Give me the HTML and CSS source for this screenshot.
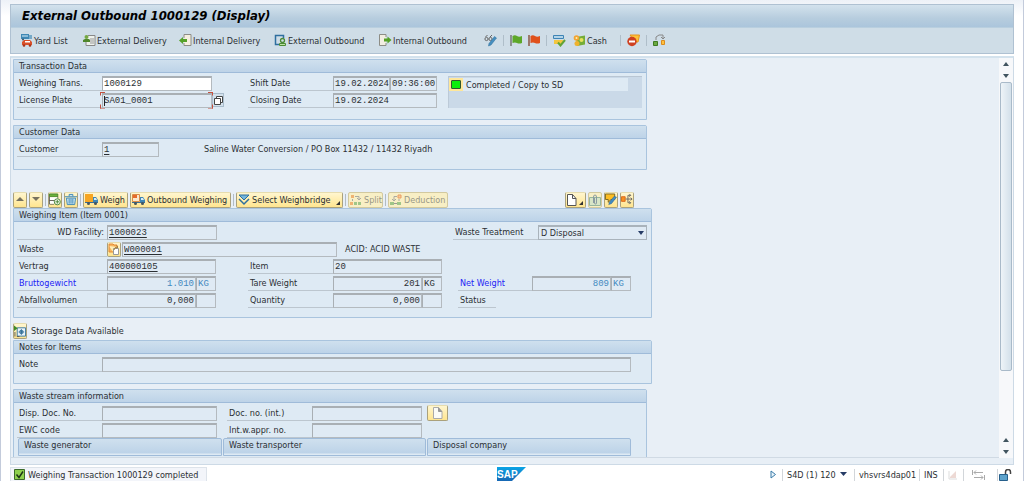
FILE: index.html
```
<!DOCTYPE html>
<html lang="en">
<head>
<meta charset="utf-8">
<title>External Outbound 1000129 (Display)</title>
<link rel="stylesheet" href="styles.css">
</head>
<body>
<div class="window">
  <header class="head">
    <h1 class="title">External Outbound 1000129 (Display)</h1>
    <div class="toolbar">
      <button class="tool w-yard"><svg width="13" height="13" viewBox="0 0 13 13"><path d="M1 0h8v5H1z" fill="#3f88b5"/><path d="M9 1h3v4H9z" fill="#75a9c8"/><path d="M2 2h6" stroke="#d9edf7"/><circle cx="3" cy="5.500" r="1" fill="#3b566b"/><path d="M2 8l2-2h6l2 2v3H2z" fill="#d9502b"/><path d="M5 7h5v1.500H5z" fill="#fff"/><circle cx="4" cy="11.500" r="1.300" fill="#a93419"/><circle cx="10" cy="11.500" r="1.300" fill="#a93419"/></svg>Yard List</button>
      <button class="tool w-extdel"><svg width="13" height="13" viewBox="0 0 13 13"><path d="M5 1.500h7v10H3V8" fill="#eef1ec" stroke="#888"/><path d="M7 5h4M7 7h4M7 9h4" stroke="#999"/><circle cx="3.500" cy="3" r="2" fill="#75a843"/><path d="M0 8V6l2-1h4l1 1v2z" fill="#4f872b"/></svg>External Delivery</button>
      <button class="tool w-intdel"><svg width="13" height="13" viewBox="0 0 13 13"><path d="M5 4V.500h7v11H5V9" fill="#f6efdf" stroke="#8d8d86"/><path d="M0 6.500L4 3v2h4v3H4v2z" fill="#55a128"/></svg>Internal Delivery</button>
      <button class="tool w-extout"><svg width="13" height="13" viewBox="0 0 13 13"><path d="M5 10.500H1.500v-9h8V4" fill="none" stroke="#2f6f9f" stroke-width="1.500"/><circle cx="8.500" cy="6.500" r="2" fill="none" stroke="#4b8b35" stroke-width="1.300"/><path d="M5.500 11.500V9.500h6v2z" fill="#bde0a4" stroke="#4b8b35"/></svg>External Outbound</button>
      <button class="tool w-intout"><svg width="13" height="13" viewBox="0 0 13 13"><path d="M7 3V.500H.500v11H7V9" fill="#f2eee2" stroke="#8d8d86"/><path d="M12.500 6L8.500 2.500v2H5v3h3.500v2z" fill="#55a128"/></svg>Internal Outbound</button>
      <button class="tool w-icon" aria-label="Display or change"><svg width="13" height="13" viewBox="0 0 13 13"><g fill="none" stroke="#666"><circle cx="2.500" cy="5" r="1.600"/><circle cx="6.500" cy="5" r="1.600"/><path d="M1.500 3l2-2M6 3l2-2"/></g><path d="M12.500 4L7 11l-2.500 1 .500-2.500L10.500 2.500z" fill="#468fc0" stroke="#2d6c99" stroke-width=".5"/></svg></button>
      <span class="sep"></span>
      <button class="tool w-flag" aria-label="Green flag"><svg width="13" height="13" viewBox="0 0 13 13"><path d="M1 1v11" stroke="#777" stroke-width="1.500"/><path d="M2.500 2Q5 .500 7 2t5 0v7q-3 1-5 0t-4.500 0z" fill="#5da829"/></svg></button>
      <button class="tool w-flag" aria-label="Red flag"><svg width="13" height="13" viewBox="0 0 13 13"><path d="M1 1v11" stroke="#8b5645" stroke-width="1.500"/><path d="M2.500 2Q5 .500 7 2t5 0v7q-3 1-5 0t-4.500 0z" fill="#e0511c"/></svg></button>
      <span class="sep"></span>
      <button class="tool w-check" aria-label="Check document"><svg width="13" height="13" viewBox="0 0 13 13"><path d="M.500 1.500h10v3H.500z" fill="#b3d4e8" stroke="#3d84b5"/><path d="M1 6h9v2l-2 2H1z" fill="#f3c63f"/><path d="M5 8.500l2.500 3L12 6" fill="none" stroke="#62a336" stroke-width="2"/></svg></button>
      <button class="tool w-cash"><svg width="13" height="13" viewBox="0 0 13 13"><path d="M3 3l9-1.500v9L4 12z" fill="#75ad38"/><circle cx="3.500" cy="4" r="2.800" fill="#f2a534"/><circle cx="8.500" cy="6" r="2" fill="#e7e15c"/><circle cx="4" cy="9.500" r="2.500" fill="#efb22d"/><circle cx="3.500" cy="4" r="1" fill="#fff1b0"/></svg>Cash</button>
      <span class="sep"></span>
      <button class="tool w-stop" aria-label="Stop"><svg width="13" height="13" viewBox="0 0 13 13"><path d="M3 1h9.500L11 8H8z" fill="#ffc338" stroke="#e8941e"/><circle cx="5" cy="7.500" r="4.700" fill="#cf4121"/><path d="M2 7.500h6" stroke="#fff" stroke-width="2"/></svg></button>
      <span class="sep"></span>
      <button class="tool" aria-label="Relations"><svg width="13" height="13" viewBox="0 0 13 13"><path d="M3 6V3l3-2h4v4M8 3l2 2 2-2" fill="none" stroke="#888"/><path d="M.500 7.500h4v4h-4z" fill="#69a941" stroke="#3f7a21"/><path d="M8.500 6.500h3v4h-3z" fill="#ffc13e" stroke="#db8c1e"/></svg></button>
    </div>
  </header>

  <main class="body">
    <div class="content">
      <section class="panel narrow trans">
        <h2>Transaction Data</h2>
        <div class="split">
          <div class="rows">
            <div class="row g-trans"><label for="wt">Weighing Trans.</label><input id="wt" class="edit" value="1000129"><i></i><label for="sd">Shift Date</label><input id="sd" value="19.02.2024" readonly><input aria-label="Shift time" value="09:36:00" readonly></div>
            <div class="row g-trans2"><label for="lp">License Plate</label><span class="focus"><input id="lp" value="SA01_0001" readonly><b class="caret"></b></span><button class="match" aria-label="Search help"><svg width="11" height="11" viewBox="0 0 11 11"><path d="M3.500 1.500h6v6h-6z" fill="#fff" stroke="#444"/><path d="M1.500 3.500h6v6h-6z" fill="#fff" stroke="#444"/></svg></button><i></i><label for="cd">Closing Date</label><input id="cd" value="19.02.2024" readonly></div>
          </div>
          <div class="state"><div class="state-line"><span class="lamp"><b></b></span>Completed / Copy to SD</div></div>
        </div>
      </section>

      <section class="panel narrow cust">
        <h2>Customer Data</h2>
        <div class="rows">
          <div class="row g-cust"><label for="cu">Customer</label><input id="cu" class="u" value="1" readonly><i></i><span>Saline Water Conversion / PO Box 11432 / 11432 Riyadh</span></div>
        </div>
      </section>

      <div class="actions">
        <button class="btn sq" aria-label="Previous"><svg width="9" height="9" viewBox="0 0 9 9"><path d="M0 6h8L4 2z" fill="#777260"/></svg></button>
        <button class="btn sq" aria-label="Next"><svg width="9" height="9" viewBox="0 0 9 9"><path d="M0 2h8L4 6z" fill="#777260"/></svg></button>
        <span class="bar"></span>
        <button class="btn sq" aria-label="Insert row"><svg width="12" height="13" viewBox="0 0 13 13"><path d="M.500.500h9v3h-9z" fill="#6bb13b" stroke="#46842a"/><path d="M9.500 3.500v2M.500 3.500v8h5M.500 7.500h6" fill="none" stroke="#555"/><path d="M1 4h8v3H1zM1 8h5v3H1z" fill="#fff"/><circle cx="9" cy="9" r="3.300" fill="#eef6e4" stroke="#46843a"/><path d="M7 9h4M9 7v4" stroke="#46843a"/></svg></button>
        <button class="btn sq" aria-label="Delete"><svg width="12" height="13" viewBox="0 0 13 13"><path d="M0 3.500h13M4.500 3V1h4v2M1.500 5l1 7h8l1-7zM4.500 6v5M6.500 6v5M8.500 6v5" fill="#c9e3ef" stroke="#3b86b5"/></svg></button>
        <span class="bar"></span>
        <button class="btn w-weigh"><svg width="13" height="13" viewBox="0 0 13 13"><path d="M0 1h8v8H0z" fill="#f6a623"/><path d="M8 4h3l2 3v3H8z" fill="#3f86b5"/><path d="M9 5h2l1 2H9z" fill="#d6ecf8"/><path d="M0 9h13v1H0z" fill="#396e96"/><circle cx="3.500" cy="10.500" r="1.500" fill="#44545e"/><circle cx="10.500" cy="10.500" r="1.500" fill="#44545e"/></svg>Weigh</button>
        <button class="btn w-out"><svg width="13" height="13" viewBox="0 0 13 13"><path d="M.500 1.500h7v7h-7z" fill="#fbe8cc" stroke="#db8c45"/><path d="M1 2h4v3H1z" fill="#e56b2b"/><path d="M8 4h3l2 3v3H8z" fill="#3f86b5"/><path d="M9 5h2l1 2H9z" fill="#d6ecf8"/><path d="M0 9h13v1H0z" fill="#396e96"/><circle cx="3.500" cy="10.500" r="1.500" fill="#44545e"/><circle cx="10.500" cy="10.500" r="1.500" fill="#44545e"/></svg>Outbound Weighing</button>
        <span class="bar"></span>
        <button class="btn w-select menu"><svg width="12" height="12" viewBox="0 0 12 12"><path d="M1 1h10L6 6z" fill="#75b6dc" stroke="#2d6f9e"/><path d="M1 5l5 5 5-5" fill="none" stroke="#2d6f9e" stroke-width="1.500"/></svg>Select Weighbridge</button>
        <span class="bar"></span>
        <button class="btn w-split" disabled><svg width="12" height="12" viewBox="0 0 12 12"><path d="M1 1h3v3H1z" fill="#eda55f"/><path d="M5 2.500h4V6M7 4l2 2 2-2M2.500 5v2" fill="none" stroke="#999"/><path d="M0 8h3v3H0z" fill="#eda55f"/><path d="M4 8h3v3H4zM8 8h3v3H8z" fill="#8bbd79"/></svg>Split</button>
        <span class="bar"></span>
        <button class="btn w-ded" disabled><svg width="12" height="12" viewBox="0 0 12 12"><path d="M8 1h3v3H8z" fill="#f7c295" stroke="#e88a4b"/><path d="M7 2.500H4V7M2 5l2 2 2-2M9 5v2" fill="none" stroke="#999"/><path d="M0 8h4v3H0zM7 8h4v3H7z" fill="#8bbd79"/><path d="M4 9.500h3" stroke="#888"/></svg>Deduction</button>
        <span class="grow"></span>
        <button class="btn w-new menu" aria-label="Create"><svg width="10" height="12" viewBox="0 0 10 12"><path d="M.500.500h5l3.500 4v7H.500z" fill="#fff" stroke="#555"/><path d="M5.500.500v4H9" fill="none" stroke="#555"/></svg></button>
        <button class="btn sq" disabled aria-label="Attachments"><svg width="12" height="12" viewBox="0 0 12 12"><path d="M.500 3.500h11v8H.500z" fill="#cfe3c8" stroke="#80a894"/><path d="M4.500 9V3q0-2 1.500-2t1.500 2v6q0 1-1 1t-1-1V4" fill="none" stroke="#70879a"/></svg></button>
        <button class="btn sq" aria-label="Edit text"><svg width="12" height="13" viewBox="0 0 13 13"><path d="M.500.500h10v6h-4l-3 3v-3h-3z" fill="#fcbd24" stroke="#77631c"/><path d="M12.500 4L7 11l-3 1 1-3 5-6z" fill="#438bc0" stroke="#285f8a" stroke-width=".5"/></svg></button>
        <button class="btn sq" aria-label="Distribute"><svg width="12" height="13" viewBox="0 0 13 13"><path d="M.500 3.500h4v5h-4z" fill="#f5921f" stroke="#d8651c"/><path d="M5 6h7M7.500 6V2h3M7.500 6v4h3M9 .500L10.500 2 9 3.500M10.500 4.500L12 6l-1.500 1.500M9 8.500l1.500 1.500L9 11.500" fill="none" stroke="#666"/></svg></button>
      </div>

      <section class="panel wide item">
        <h2>Weighing Item (Item 0001)</h2>
        <div class="rows">
          <div class="row g-fac"><label class="right" for="wf">WD Facility:</label><input id="wf" class="u" value="1000023" readonly><i></i><label for="tr">Waste Treatment</label><span class="drop"><select id="tr"><option>D Disposal</option></select></span></div>
          <div class="row g-waste"><label for="wa">Waste</label><button class="btn small" aria-label="Open waste"><svg width="12" height="12" viewBox="0 0 12 12"><path d="M1 3V1h4l1 1h3v2M1 3v6h4" fill="#f8b55f" stroke="#e28a36"/><path d="M5.500 5.500h5v6h-5z" fill="#fff" stroke="#999"/><path d="M6 7q0-3 4-3M8.500 2.500L10 4 8.500 5.500" fill="none" stroke="#a5803c"/></svg></button><input id="wa" class="u" value="W000001" readonly><i></i><span>ACID: ACID WASTE</span></div>
          <div class="row g-val"><label for="ve">Vertrag</label><input id="ve" class="span2 u" value="400000105" readonly><i></i><label for="it">Item</label><input id="it" class="span2" value="20" readonly></div>
          <div class="row g-val"><label class="blue" for="br">Bruttogewicht</label><input id="br" class="num lite" value="1.010" readonly><input class="lite" aria-label="Gross unit" value="KG" readonly><i></i><label for="ta">Tare Weight</label><input id="ta" class="num" value="201" readonly><input aria-label="Tare unit" value="KG" readonly><i></i><label class="blue" for="ne">Net Weight</label><input id="ne" class="num lite" value="809" readonly><input class="lite" aria-label="Net unit" value="KG" readonly></div>
          <div class="row g-val"><label for="ab">Abfallvolumen</label><input id="ab" class="num" value="0,000" readonly><input aria-label="Volume unit" readonly><i></i><label for="qu">Quantity</label><input id="qu" class="num" value="0,000" readonly><input aria-label="Quantity unit" readonly><i></i><span class="lbl status-lbl">Status</span></div>
        </div>
      </section>

      <div class="storage"><button class="btn sq" aria-label="Storage data"><svg width="12" height="13" viewBox="0 0 13 13"><path d="M3.500 2.500h9v9h-9z" fill="#eaf4fa" stroke="#36759d"/><path d="M5 7h6M8 4v6" stroke="#245f8c"/><path d="M6.500 5.500h3v3h-3z" fill="none" stroke="#36759d"/><path d="M0 0l4 3-4 3z" fill="#3f8b25"/><path d="M1 7v5M3 12h3" stroke="#555"/></svg></button><span>Storage Data Available</span></div>

      <section class="panel wide notes">
        <h2>Notes for Items</h2>
        <div class="rows"><div class="row g-note"><label for="no">Note</label><input id="no" readonly></div></div>
      </section>

      <section class="panel narrow stream">
        <h2>Waste stream information</h2>
        <div class="rows">
          <div class="row g-str"><label for="dd">Disp. Doc. No.</label><input id="dd" readonly><i></i><label for="dn">Doc. no. (int.)</label><input id="dn" readonly><i></i><button class="btn doc" aria-label="Open document"><svg width="10" height="12" viewBox="0 0 10 12"><path d="M.500.500h5l3.500 4v7H.500z" fill="#fbfbf6" stroke="#aaa"/><path d="M5.500.500v4H9" fill="#999" stroke="#999"/></svg></button></div>
          <div class="row g-str"><label for="ew">EWC code</label><input id="ew" readonly><i></i><label for="ia">Int.w.appr. no.</label><input id="ia" readonly></div>
        </div>
        <div class="subs"><h3>Waste generator</h3><h3>Waste transporter</h3><h3>Disposal company</h3></div>
      </section>
    </div>
    <div class="scroll">
      <svg class="arrow" viewBox="0 0 12 12"><path d="M3 8h6L6 4z" fill="#41545f"/></svg>
      <svg class="arrow" viewBox="0 0 12 12"><path d="M3 4h6L6 8z" fill="#41545f"/></svg>
      <div class="track"><div class="thumb"></div></div>
      <svg class="arrow" viewBox="0 0 12 12"><path d="M3 8h6L6 4z" fill="#41545f"/></svg>
      <svg class="arrow" viewBox="0 0 12 12"><path d="M3 4h6L6 8z" fill="#41545f"/></svg>
    </div>
  </main>

  <footer class="foot">
    <div class="msg"><svg width="11" height="11" viewBox="0 0 11 11"><path d="M.500.500h10v10H.500z" fill="#8fd14f" stroke="#3c6b2b"/><path d="M2.500 5.500l2.500 3 4-6" fill="none" stroke="#1d3317" stroke-width="1.500"/></svg>Weighing Transaction 1000129 completed</div>
    <svg class="logo" width="30" height="14" viewBox="0 0 30 14" role="img" aria-label="SAP"><defs><linearGradient id="lg" x2="0" y2="1"><stop offset="0" stop-color="#0aa4e6"/><stop offset="1" stop-color="#1767b4"/></linearGradient></defs><path d="M0 0h29L15 14H0z" fill="url(#lg)"/><text x="0" y="11" class="logo-text">SAP</text></svg>
    <div class="sys">
      <svg class="play" width="7" height="9" viewBox="0 0 7 9"><path d="M1 1l4.500 3.500L1 8z" fill="#eaf4fb" stroke="#397ba8"/></svg>
      <span class="cell c-sys">S4D (1) 120<svg width="7" height="5" viewBox="0 0 7 5"><path d="M0 0h7L3.500 4z" fill="#263c66"/></svg></span>
      <span class="cell c-host">vhsvrs4dap01</span>
      <span class="cell c-ins">INS</span>
      <span class="cell c-a"><svg width="10" height="10" viewBox="0 0 10 10"><path d="M1 1v8h8" fill="none" stroke="#ddd"/><path d="M2 7l6-6v7H2z" fill="#edd9d4"/></svg></span>
      <span class="cell c-b"><svg width="13" height="10" viewBox="0 0 13 10"><path d="M.500 0v5M2 2.500h9M4 .500l-2 2 2 2M12.500 5v5M2 7.500h9M9 5.500l2 2-2 2" fill="none" stroke="#aaa"/></svg></span>
      <span class="cell c-lock"><svg width="13" height="12" viewBox="0 0 13 12"><path d="M6.500 6V3q0-2.500 2.500-2.500T11.500 3v2" fill="none" stroke="#444" stroke-width="1.500"/><path d="M.500 5.500h8v6h-8z" fill="#5da2cb" stroke="#265f8b"/></svg></span>
    </div>
  </footer>
</div>
</body>
</html>
```
FILE: styles.css
```
* { box-sizing: border-box; }
body { margin: 0; background: #fff; color: #2b2f33; font: 9px/12px "DejaVu Sans Condensed", "DejaVu Sans", sans-serif; }
svg { flex: none; display: block; }
h1, h2, h3 { margin: 0; font: inherit; }
button, input, select { margin: 0; padding: 0; font: inherit; color: inherit; border-radius: 0; }
.window { height: 100vh; display: flex; flex-direction: column; padding: 4px 9px 0; border: 0 solid #c3cbdb; border-width: 0 1px; background: linear-gradient(#edf1f7, #fff 16px); overflow: hidden; }

.head { border: 1px solid #afc1d2; background: #cfdde7; }
.title { height: 23px; padding-left: 11px; font: italic bold 13px/22px "DejaVu Sans Condensed", sans-serif; color: #000; background: linear-gradient(#d3e2ed, #b7cdde 60%, #abc5dc); border-bottom: 1px solid #b9cfdf; }
.toolbar { height: 25px; display: flex; align-items: center; padding-left: 9px; }
.tool { display: flex; align-items: center; gap: 1px; border: 0; background: none; white-space: nowrap; }
.w-yard { width: 63px; }
.w-extdel { width: 96px; }
.w-intdel { width: 95px; }
.w-extout { width: 105px; }
.w-intout { width: 105px; }
.w-icon { width: 19px; }
.w-flag { width: 18px; }
.w-check { width: 20px; }
.w-cash { width: 47px; }
.w-stop { width: 19px; }
.sep { width: 1px; height: 11px; margin-right: 6px; background: #afbec9; }

.body { flex: 1; min-height: 0; display: flex; margin-top: 2px; border: 1px solid #cddae6; border-top: 2px solid #d3e2ed; background: #e8eff6; padding-bottom: 6px; }
.content { flex: 1; min-width: 0; min-height: 0; overflow: hidden; padding: 1px 0 0 2px; border-bottom: 1px solid #d0dae4; }
.scroll { width: 14px; display: flex; flex-direction: column; align-items: center; background: #f7f8fa; }
.arrow { width: 12px; height: 12px; }
.track { flex: 1; align-self: stretch; padding: 0 1px; }
.thumb { height: 82%; border: 1px solid #a9bac9; border-radius: 2px; background: linear-gradient(90deg, #eef4f8, #d3e0ea); }

.panel { border: 1px solid #a9c4de; border-top-right-radius: 2px; background: #deeaf4; }
.narrow { max-width: 634px; }
.wide { max-width: 639px; }
.panel h2 { height: 13px; padding-left: 5px; line-height: 13px; background: linear-gradient(#cfe0ee, #bdd3e8); border-bottom: 1px solid #9fbbd9; }
.rows { display: grid; gap: 1px; padding: 2px 0 0 3px; }
.row { display: grid; height: 16px; align-items: center; white-space: nowrap; }
.row label, .lbl { height: 15px; padding-left: 2px; line-height: 15px; border-bottom: 1px solid #bcc6cf; }
.row .right { text-align: right; padding-right: 3px; }
.row .blue { color: #2323f5; }
.row input { width: 100%; min-width: 0; height: 15px; padding: 0 0 0 1px; font: 9px/11px "Liberation Mono", monospace; background: #dfeaf4; border: 1px solid #b4babf; border-top: 2px solid #a9afb4; border-left: 1px solid #a9afb4; outline: 0; }
.row .edit { background: #fff; }
.row .num { padding-right: 1px; text-align: right; }
.row .lite { color: #4389c0; }
.row .u { text-decoration: underline; text-underline-offset: 2px; }
.span2 { grid-column: span 2; }

.trans { height: 61px; }
.split { display: flex; gap: 11px; }
.g-trans { grid-template-columns: 85px 110px 36px 85px 57px 47px; }
.g-trans2 { grid-template-columns: 85px 110px 12px 24px 85px 104px; }
.focus { position: relative; display: block; height: 15px; }
.focus::before, .focus::after { content: ""; position: absolute; z-index: 1; top: -1px; bottom: -1px; width: 4px; border: 1px solid #c4503f; }
.focus::before { left: -2px; border-right: 0; clip-path: polygon(0 0, 100% 0, 100% 4px, 0 4px, 0 13px, 100% 13px, 100% 100%, 0 100%); }
.focus::after { right: -1px; border-left: 0; clip-path: polygon(0 0, 100% 0, 100% 4px, 0 4px, 0 13px, 100% 13px, 100% 100%, 0 100%); }
.caret { position: absolute; left: 2px; top: 3px; width: 1px; height: 10px; background: #222; }
.match { height: 14px; border: 1px solid #a9bccb; background: #d3e1ec; display: flex; align-items: center; justify-content: center; }
.state { width: 194px; height: 32px; margin-top: 3px; padding-top: 1px; background: #cad9e8; border-top: 1px solid #b9c6d3; border-left: 1px solid #bccad8; }
.state-line { width: 179px; height: 13px; display: flex; align-items: center; gap: 3px; background: #deeaf4; white-space: nowrap; }
.lamp { width: 14px; height: 13px; display: grid; place-items: center; background: #ffe79a; }
.lamp b { width: 10px; height: 9px; background: #0bef0b; border: 1px solid #30572f; border-radius: 1px; }

.cust { height: 45px; margin-top: 5px; }
.g-cust { grid-template-columns: 85px 57px 45px auto; justify-content: start; }

.actions { max-width: 621px; height: 17px; margin-top: 21px; display: flex; align-items: center; gap: 2px; }
.btn { flex: none; display: flex; align-items: center; justify-content: flex-start; gap: 2px; height: 16px; padding: 0 1px; border: 1px solid #aaa17c; border-top-color: #e6dcae; border-radius: 2px; background: linear-gradient(#fff6cf, #ffe58f); white-space: nowrap; }
.btn:disabled { color: #989786; background: #f8efc5; border-color: #d2c99f; }
.btn:disabled svg { opacity: .8; }
.sq { width: 14px; padding: 0; justify-content: center; }
.bar { width: 1px; height: 12px; background: #b3bcc4; }
.w-weigh { width: 45px; }
.w-out { width: 101px; }
.w-select { width: 107px; }
.w-split { width: 35px; }
.w-ded { width: 60px; }
.w-new { width: 21px; }
.grow { flex: 1; }
.menu { position: relative; }
.menu::after { content: ""; position: absolute; right: 2px; bottom: 2px; border: 2px solid #333; border-top-color: transparent; border-left-color: transparent; }

.item { height: 110px; }
.g-fac { grid-template-columns: 90px 110px 236px 85px 109px; }
.g-waste { grid-template-columns: 90px 15px 215px 8px auto; justify-content: start; }
.g-val { grid-template-columns: 90px 89px 20px 32px 85px 89px 20px 16px 74px 79px 20px; }
.small { width: 14px; height: 15px; padding: 0; }
.status-lbl { width: 38px; }
.drop { position: relative; display: block; }
.drop select { width: 100%; height: 15px; padding-left: 2px; appearance: none; line-height: 12px; background: #dfeaf4; border: 1px solid #a9b3bb; border-top-width: 2px; }
.drop::after { content: ""; position: absolute; right: 3px; top: 6px; border: 3px solid transparent; border-top: 4px solid #263c66; border-bottom: 0; pointer-events: none; }

.storage { display: flex; align-items: center; gap: 4px; height: 16px; margin: 5px 0 1px; }
.notes { height: 44px; }
.g-note { grid-template-columns: 85px 529px; }
.stream { height: 90px; margin-top: 5px; }
.g-str { grid-template-columns: 85px 115px 10px 85px 110px 5px 21px; }
.doc { padding: 0; justify-content: center; }
.subs { display: grid; grid-template-columns: 204px 203px 204px; gap: 1px; padding-left: 4px; }
.subs h3 { height: 18px; padding-left: 5px; line-height: 13px; border: 1px solid #9fbbd9; border-radius: 2px 2px 0 0; background: linear-gradient(#cfe0ee, #bdd3e8 14px, #deeaf4 15px); }

.foot { flex: none; display: grid; grid-template-columns: 1fr auto 1fr; align-items: end; height: 16px; }
.msg { display: flex; align-items: center; gap: 3px; justify-self: start; width: 197px; height: 14px; padding-left: 3px; border: 1px solid #dde3ea; border-bottom: 0; background: #f3f5fa; white-space: nowrap; }
.logo-text { font: bold 10px "Liberation Sans", sans-serif; fill: #fff; }
.sys { display: flex; align-items: center; justify-self: end; height: 13px; padding-right: 2px; white-space: nowrap; }
.play { margin-right: 5px; }
.cell { display: flex; align-items: center; gap: 4px; height: 12px; padding-left: 4px; border-left: 1px solid #d2d6da; }
.c-sys { width: 72px; }
.c-host { width: 65px; }
.c-ins { width: 24px; }
.c-a { width: 20px; }
.c-b { width: 34px; padding-left: 8px; }
.c-lock { padding-left: 1px; }
```
